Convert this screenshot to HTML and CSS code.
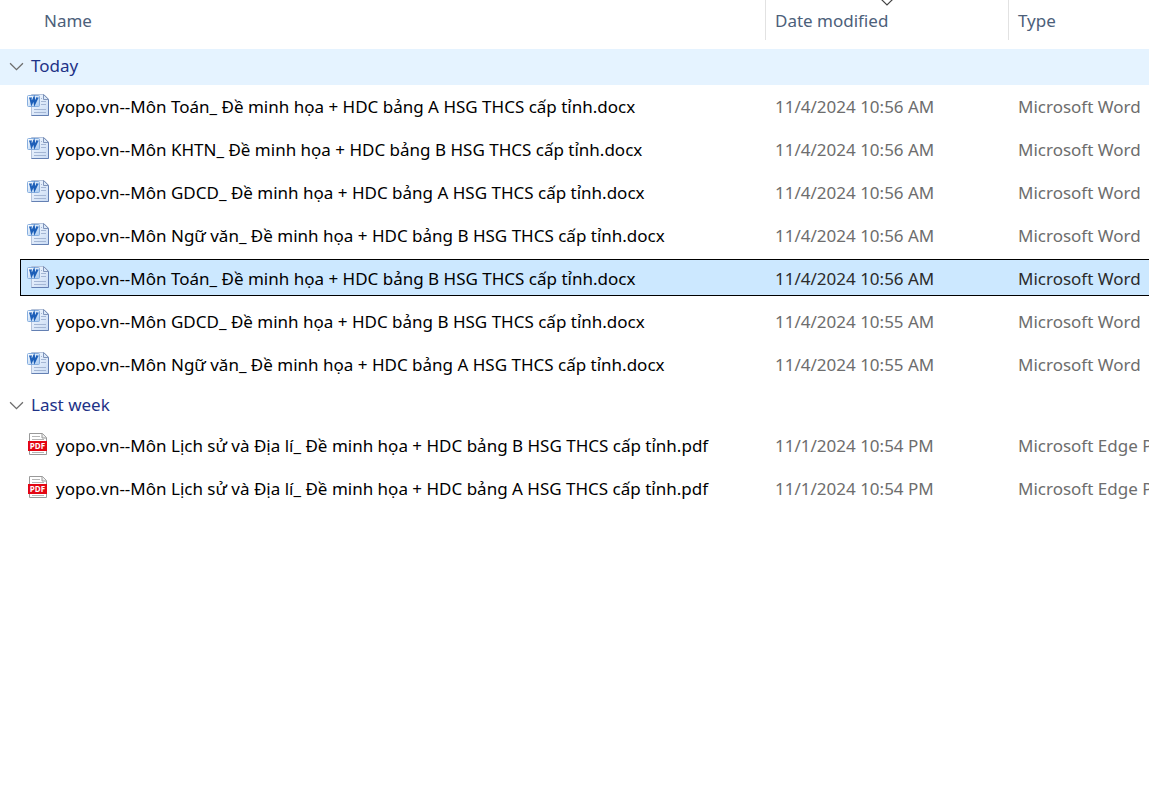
FILE: index.html
```html
<!DOCTYPE html>
<html lang="vi">
<head>
<meta charset="utf-8">
<meta name="viewport" content="width=device-width, initial-scale=1">
<title>Files</title>
<link rel="stylesheet" href="styles.css">
</head>
<body>
<svg class="sprite" aria-hidden="true">
  <defs>
    <linearGradient id="page" x1="0" y1="0" x2="1" y2="1"><stop offset="0" stop-color="#f4f9ff"/><stop offset="1" stop-color="#c9dbf4"/></linearGradient>
    <linearGradient id="tile" x1="0" y1="0" x2="1" y2="1"><stop offset="0" stop-color="#ffffff"/><stop offset="1" stop-color="#a5c8f0"/></linearGradient>
  </defs>
  <symbol id="word" viewBox="0 0 24 24">
    <path d="M5.500 1.500H18L22.500 6V22.500H5.500z" fill="url(#page)" stroke="#b4c2da"/>
    <path d="M22.500 6V22.500H5.500" fill="none" stroke="#6480b3"/>
    <path d="M17.500 1.500V6.500H22.500z" fill="#dce9f8" stroke="#8095bb"/>
    <path d="M15 5.500H16M15 8.500H20M15 11.500H20M8 16.500H20M8 19.500H20" stroke="#a4b6d4"/>
    <rect x="1.500" y="2.500" width="12" height="11" rx="1" fill="url(#tile)" stroke="#86aedf"/>
    <path d="M3 5H6M7 5H9M10 5H12.500" stroke="#1d5fb8"/>
    <path d="M4.300 5L5.600 10.500L7.900 5.500L8.700 10.500L11.300 5" fill="none" stroke="#1d5fb8" stroke-width="2"/>
  </symbol>
  <symbol id="pdf" viewBox="0 0 24 24">
    <path d="M3.500 1.500H16.500L20.500 5.500V22.500H3.500z" fill="#fff" stroke="#999"/>
    <path d="M16 1.500V6H20.500" fill="#eee" stroke="#999"/>
    <path d="M6 4.500H14M6 7.500H18M6 20.500H18" stroke="#b5b5b5"/>
    <rect x="2" y="9" width="19" height="10" fill="#e30613"/>
    <text class="pdf-text" x="11.500" y="17" text-anchor="middle">PDF</text>
  </symbol>
  <symbol id="chevron" viewBox="0 0 14 8"><path d="M1 1L7 7L13 1" fill="none" stroke="currentColor" stroke-width="1.200"/></symbol>
</svg>
<table class="files">
  <thead>
    <tr class="head">
      <th class="name" scope="col">Name</th>
      <th class="date" scope="col" aria-sort="descending">Date modified<svg class="sort" aria-hidden="true"><use href="#chevron"/></svg></th>
      <th class="type" scope="col">Type</th>
    </tr>
  </thead>
  <tbody>
    <tr class="group hover"><th colspan="3" scope="rowgroup"><button class="toggle" type="button" aria-expanded="true"><svg class="chevron" aria-hidden="true"><use href="#chevron"/></svg>Today</button></th></tr>
    <tr class="file"><td class="name"><svg class="icon" aria-hidden="true"><use href="#word"/></svg>yopo.vn--Môn Toán_ Đề minh họa + HDC bảng A HSG THCS cấp tỉnh.docx</td><td class="date">11/4/2024 10:56 AM</td><td class="type">Microsoft Word</td></tr>
    <tr class="file"><td class="name"><svg class="icon" aria-hidden="true"><use href="#word"/></svg>yopo.vn--Môn KHTN_ Đề minh họa + HDC bảng B HSG THCS cấp tỉnh.docx</td><td class="date">11/4/2024 10:56 AM</td><td class="type">Microsoft Word</td></tr>
    <tr class="file"><td class="name"><svg class="icon" aria-hidden="true"><use href="#word"/></svg>yopo.vn--Môn GDCD_ Đề minh họa + HDC bảng A HSG THCS cấp tỉnh.docx</td><td class="date">11/4/2024 10:56 AM</td><td class="type">Microsoft Word</td></tr>
    <tr class="file"><td class="name"><svg class="icon" aria-hidden="true"><use href="#word"/></svg>yopo.vn--Môn Ngữ văn_ Đề minh họa + HDC bảng B HSG THCS cấp tỉnh.docx</td><td class="date">11/4/2024 10:56 AM</td><td class="type">Microsoft Word</td></tr>
    <tr class="file selected" aria-selected="true"><td class="name"><svg class="icon" aria-hidden="true"><use href="#word"/></svg>yopo.vn--Môn Toán_ Đề minh họa + HDC bảng B HSG THCS cấp tỉnh.docx</td><td class="date">11/4/2024 10:56 AM</td><td class="type">Microsoft Word</td></tr>
    <tr class="file"><td class="name"><svg class="icon" aria-hidden="true"><use href="#word"/></svg>yopo.vn--Môn GDCD_ Đề minh họa + HDC bảng B HSG THCS cấp tỉnh.docx</td><td class="date">11/4/2024 10:55 AM</td><td class="type">Microsoft Word</td></tr>
    <tr class="file"><td class="name"><svg class="icon" aria-hidden="true"><use href="#word"/></svg>yopo.vn--Môn Ngữ văn_ Đề minh họa + HDC bảng A HSG THCS cấp tỉnh.docx</td><td class="date">11/4/2024 10:55 AM</td><td class="type">Microsoft Word</td></tr>
  </tbody>
  <tbody>
    <tr class="group"><th colspan="3" scope="rowgroup"><button class="toggle" type="button" aria-expanded="true"><svg class="chevron" aria-hidden="true"><use href="#chevron"/></svg>Last week</button></th></tr>
    <tr class="file"><td class="name"><svg class="icon" aria-hidden="true"><use href="#pdf"/></svg>yopo.vn--Môn Lịch sử và Địa lí_ Đề minh họa + HDC bảng B HSG THCS cấp tỉnh.pdf</td><td class="date">11/1/2024 10:54 PM</td><td class="type">Microsoft Edge P</td></tr>
    <tr class="file"><td class="name"><svg class="icon" aria-hidden="true"><use href="#pdf"/></svg>yopo.vn--Môn Lịch sử và Địa lí_ Đề minh họa + HDC bảng A HSG THCS cấp tỉnh.pdf</td><td class="date">11/1/2024 10:54 PM</td><td class="type">Microsoft Edge P</td></tr>
  </tbody>
</table>
</body>
</html>
```
FILE: styles.css
```css
* { box-sizing: border-box; }
body {
  margin: 0;
  background: #fff;
  color: #000;
  font: 17px/24px "Noto Sans", "Open Sans", sans-serif;
}
.sprite { position: absolute; width: 0; height: 0; }
.files, .files thead, .files tbody { display: block; }
.files tbody + tbody { margin-top: 1px; }
.head, .file {
  display: grid;
  grid-template-columns: minmax(0, 1fr) 243px 141px;
}
th, td {
  padding: 0;
  font-weight: 400;
  text-align: left;
  white-space: nowrap;
}
.head { padding-bottom: 9px; color: #4c607a; }
.head th { padding: 9px 0 7px 9px; }
.head .name { padding-left: 44px; }
.head .date, .head .type { border-left: 1px solid #e2e2e2; }
.head .date { position: relative; }
.sort {
  position: absolute;
  top: -2px;
  left: 50%;
  width: 14px;
  height: 8px;
  margin-left: -7px;
  color: #444;
}
.group, .group th { display: block; }
.group.hover { background: #e5f3ff; }
.toggle {
  display: flex;
  align-items: center;
  gap: 7px;
  width: 100%;
  height: 36px;
  padding: 0 9px 2px;
  border: 0;
  background: none;
  color: #1e3287;
  font: inherit;
}
.chevron { width: 15px; height: 9px; color: #6d6d6d; }
.file {
  align-items: center;
  height: 37px;
  margin: 2px 0 6px 20px;
  border: 1px solid transparent;
  border-right: 0;
}
.file td { padding-top: 3px; }
.file .name {
  display: flex;
  align-items: center;
  gap: 6px;
  padding-left: 5px;
}
.file .date, .file .type {
  padding-left: 10px;
  color: #6d6d6d;
}
.file .type { overflow: hidden; }
.file.selected { background: #cce8ff; border-color: #000; }
.file.selected .date, .file.selected .type { color: #2b2b2b; }
.icon { flex: none; width: 24px; height: 24px; margin-bottom: 4px; }
.pdf-text { fill: #fff; font: 700 8px "Open Sans", sans-serif; }
```
